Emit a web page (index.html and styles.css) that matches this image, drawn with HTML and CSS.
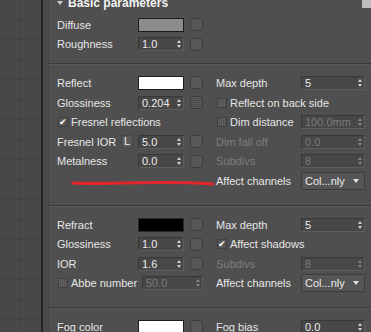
FILE: index.html
```html
<!doctype html>
<html lang="en">
  <head>
    <meta charset="UTF-8" />
    <title>Basic parameters</title>
    <link rel="stylesheet" href="styles.css">
  </head>
  <body>
    <div class="layout">
      <div class="side"></div>
      <div class="rule"></div>
      <div class="gutter"></div>
      <div class="panel">
        <div class="grip"></div>
        <div class="rollout-title">
          <svg class="caret" viewBox="0 0 6 4" width="6" height="4"><path d="M0 0h6L3 4z" fill="#cfcfcf" /></svg>
          Basic parameters
        </div>

        <div class="group first">
          <div class="cell">
            <span class="label">Diffuse</span>
            <span class="swatch gray"></span>
            <span class="map-btn"></span>
          </div>
          <div class="cell"></div>
          <div class="cell">
            <span class="label">Roughness</span>
            <span class="spinner">1.0</span>
            <span class="map-btn"></span>
          </div>
          <div class="cell"></div>
        </div>

        <div class="group">
          <div class="cell">
            <span class="label">Reflect</span>
            <span class="swatch white"></span>
            <span class="map-btn"></span>
          </div>
          <div class="cell right">
            <span class="label">Max depth</span>
            <span class="spinner wide">5</span>
          </div>
          <div class="cell">
            <span class="label">Glossiness</span>
            <span class="spinner">0.204</span>
            <span class="map-btn striped"></span>
          </div>
          <div class="cell right">
            <span class="check"></span>
            <span class="label">Reflect on back side</span>
          </div>
          <div class="cell">
            <span class="check on">&#10004;</span>
            <span class="label">Fresnel reflections</span>
          </div>
          <div class="cell right">
            <span class="check"></span>
            <span class="label grow">Dim distance</span>
            <span class="spinner wide off">100.0mm</span>
          </div>
          <div class="cell">
            <span class="label">Fresnel IOR</span>
            <span class="lock-btn">L</span>
            <span class="spinner">5.0</span>
            <span class="map-btn"></span>
          </div>
          <div class="cell right">
            <span class="label off">Dim fall off</span>
            <span class="spinner wide off">0.0</span>
          </div>
          <div class="cell">
            <span class="label">Metalness</span>
            <span class="spinner">0.0</span>
            <span class="map-btn"></span>
          </div>
          <div class="cell right">
            <span class="label off">Subdivs</span>
            <span class="spinner wide off">8</span>
          </div>
          <div class="cell"></div>
          <div class="cell right">
            <span class="label">Affect channels</span>
            <span class="dropdown">Col...nly</span>
          </div>
        </div>

        <div class="group">
          <div class="cell">
            <span class="label">Refract</span>
            <span class="swatch black"></span>
            <span class="map-btn"></span>
          </div>
          <div class="cell right">
            <span class="label">Max depth</span>
            <span class="spinner wide">5</span>
          </div>
          <div class="cell">
            <span class="label">Glossiness</span>
            <span class="spinner">1.0</span>
            <span class="map-btn"></span>
          </div>
          <div class="cell right">
            <span class="check on">&#10004;</span>
            <span class="label">Affect shadows</span>
          </div>
          <div class="cell">
            <span class="label">IOR</span>
            <span class="spinner">1.6</span>
            <span class="map-btn"></span>
          </div>
          <div class="cell right">
            <span class="label off">Subdivs</span>
            <span class="spinner wide off">8</span>
          </div>
          <div class="cell">
            <span class="check"></span>
            <span class="label grow">Abbe number</span>
            <span class="spinner long off">50.0</span>
          </div>
          <div class="cell right">
            <span class="label">Affect channels</span>
            <span class="dropdown">Col...nly</span>
          </div>
        </div>

        <div class="group">
          <div class="cell">
            <span class="label">Fog color</span>
            <span class="swatch white"></span>
            <span class="map-btn"></span>
          </div>
          <div class="cell right">
            <span class="label">Fog bias</span>
            <span class="spinner wide">0.0</span>
          </div>
        </div>

        <svg class="scribble" viewBox="0 0 160 12" width="160" height="12">
          <path d="M24 6 C60 8, 100 3, 164 7" fill="none" stroke="#e2262c" stroke-width="3.2" stroke-linecap="round" />
        </svg>
      </div>
    </div>
  </body>
</html>
```

FILE: styles.css
```css
* {
  margin: 0;
  padding: 0;
  box-sizing: border-box;
}

body {
  font-family: 'Liberation Sans', Arial, sans-serif;
  font-size: 11px;
  color: #e6e6e6;
  background: #4f4f4f;
  width: 371px;
  height: 332px;
  overflow: hidden;
}

.layout {
  display: flex;
  height: 332px;
}

.side {
  width: 41px;
  background:
    repeating-linear-gradient(180deg, transparent 0 19px, #424242 19px 20px),
    repeating-linear-gradient(90deg, #474747 0 4px, #4a4a4a 4px 6px);
}

.rule {
  width: 2px;
  background: #242424;
}

.gutter {
  width: 6px;
  background: #4a4a4a;
  border-right: 1px solid #444444;
}

.panel {
  flex: 1;
  position: relative;
}

.grip {
  position: absolute;
  top: 0;
  right: 0;
  width: 9px;
  height: 8px;
  background: radial-gradient(circle, #bdbdbd 0.8px, transparent 1px) 0 0 / 2px 2px;
}

.rollout-title {
  display: flex;
  align-items: center;
  gap: 5px;
  height: 12px;
  line-height: 12px;
  margin-top: -3px;
  padding-left: 8px;
  font-size: 12px;
  font-weight: bold;
  color: #f2f2f2;
}

.group {
  display: grid;
  grid-template-columns: 146px 149px;
  grid-auto-rows: 19.6px;
  column-gap: 13px;
  padding: 8px 0 14px 8px;
  border-bottom: 1px solid #3a3a3a;
  box-shadow: 0 1px 0 #585858;
  margin-bottom: 1px;
}

.group.first {
  padding-top: 6px;
  padding-bottom: 9px;
}

.cell {
  display: flex;
  align-items: center;
}

.label {
  flex: 1;
  white-space: nowrap;
}

.label.off {
  color: #7e7e7e;
}

.spinner,
.dropdown {
  position: relative;
  height: 14px;
  width: 46px;
  padding-left: 3px;
  line-height: 12px;
  background: #474747;
  border: 1px solid #373737;
  border-right-color: #5e5e5e;
  border-bottom-color: #5e5e5e;
  border-radius: 1px;
  color: #ececec;
}

.spinner::before,
.spinner::after {
  content: '';
  position: absolute;
  right: 2px;
  border-left: 2.5px solid transparent;
  border-right: 2.5px solid transparent;
}

.spinner::before {
  top: 2px;
  border-bottom: 3px solid #d0d0d0;
}

.spinner::after {
  top: 7px;
  border-top: 3px solid #d0d0d0;
}

.spinner.wide {
  width: 64px;
}

.spinner.long {
  width: 61px;
}

.spinner.off {
  color: #7a7a7a;
}

.spinner.off::before,
.spinner.off::after {
  opacity: 0.45;
}

.dropdown {
  width: 64px;
  height: 18px;
  line-height: 16px;
  background: #555555;
  border-color: #3c3c3c;
}

.dropdown::after {
  content: '';
  position: absolute;
  right: 5px;
  top: 6px;
  border-left: 3px solid transparent;
  border-right: 3px solid transparent;
  border-top: 4px solid #e6e6e6;
}

.swatch {
  width: 46px;
  height: 14px;
  border: 1px solid #1c1c1c;
}

.swatch.gray {
  background: #8c8c8c;
}

.swatch.white {
  background: #ffffff;
}

.swatch.black {
  background: #000000;
  border-color: #2a2a2a;
}

.map-btn {
  width: 13px;
  height: 13px;
  margin-left: 6px;
  background: #575757;
  border: 1px solid #3d3d3d;
  border-radius: 3px;
}

.map-btn.striped {
  background: repeating-linear-gradient(180deg, #5a5a5a 0 1px, #4d4d4d 1px 2px);
}

.lock-btn {
  width: 12px;
  height: 13px;
  margin-right: 5px;
  background: #5a5a5a;
  border: 1px solid #444444;
  border-radius: 2px;
  font-size: 11px;
  line-height: 11px;
  text-align: center;
  color: #eeeeee;
}

.check {
  width: 10px;
  height: 10px;
  margin: 0 3px 0 1px;
  background: repeating-linear-gradient(90deg, #5f5f5f 0 1px, #545454 1px 2px);
  border: 1px solid #3f3f3f;
  font-size: 9px;
  line-height: 9px;
  text-align: center;
  color: #ffffff;
}

.check.on {
  background: #555555;
}

.scribble {
  position: absolute;
  left: 0;
  top: 177px;
  overflow: visible;
}
```
